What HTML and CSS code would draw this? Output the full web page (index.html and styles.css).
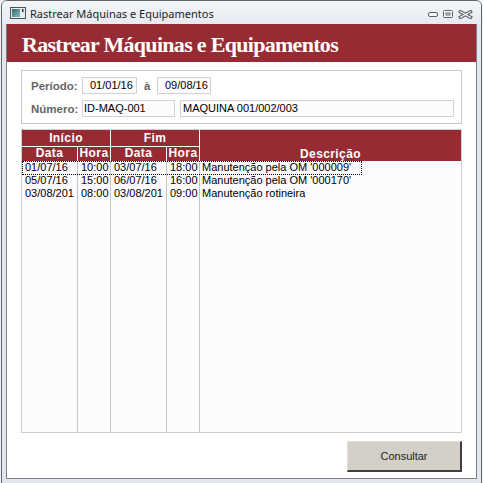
FILE: index.html
```html
<!DOCTYPE html>
<html lang="pt">
<head>
<meta charset="utf-8">
<title>Rastrear Máquinas e Equipamentos</title>
<link rel="stylesheet" href="styles.css">
</head>
<body>
<div class="window">
  <div class="titlebar">
    <svg class="appicon" width="16" height="12" viewBox="0 0 16 12">
      <defs>
        <linearGradient id="ig" x1="0" y1="0" x2="1" y2="1">
          <stop offset="0" stop-color="#2d6a63"/>
          <stop offset="1" stop-color="#8fb8c8"/>
        </linearGradient>
      </defs>
      <rect x="0.5" y="0.5" width="15" height="11" fill="#e8edf2" stroke="#4b545b"/>
      <rect x="2" y="2" width="8" height="8" fill="url(#ig)"/>
      <rect x="12" y="2" width="1.5" height="3" fill="#333"/>
    </svg>
    <span class="title">Rastrear Máquinas e Equipamentos</span>
    <div class="controls">
      <svg width="10" height="7" viewBox="0 0 10 7"><rect x="0.5" y="1.5" width="9" height="4" rx="1.5" fill="#fff" stroke="#5a5d62"/></svg>
      <svg width="10" height="8" viewBox="0 0 10 8"><rect x="0.5" y="0.5" width="9" height="7" rx="1" fill="#fff" stroke="#5a5d62"/><rect x="3" y="3" width="4" height="2" fill="none" stroke="#5a5d62"/></svg>
      <svg width="15" height="9" viewBox="0 0 15 9"><path d="M2.5 1.8 L12.5 7.2 M12.5 1.8 L2.5 7.2" stroke="#5a5d62" stroke-width="3.4" stroke-linecap="square" fill="none"/><path d="M2.5 1.8 L12.5 7.2 M12.5 1.8 L2.5 7.2" stroke="#fff" stroke-width="1.3" stroke-linecap="square" fill="none"/></svg>
    </div>
  </div>
  <div class="client">
    <div class="banner">Rastrear Máquinas e Equipamentos</div>
    <div class="content">
      <div class="criteria">
        <div class="row">
          <span class="label">Período:</span>
          <span class="input date">01/01/16</span>
          <span class="label sep">à</span>
          <span class="input date date2">09/08/16</span>
        </div>
        <div class="row">
          <span class="label">Número:</span>
          <span class="input id">ID-MAQ-001</span>
          <span class="input name">MAQUINA 001/002/003</span>
        </div>
      </div>
      <div class="grid">
        <div class="head">
          <div class="g1">Início</div>
          <div class="g2">Fim</div>
          <div class="desc">Descrição</div>
          <div class="sub">Data</div>
          <div class="sub">Hora</div>
          <div class="sub">Data</div>
          <div class="sub">Hora</div>
        </div>
        <div class="body">
          <div>01/07/16</div><div>10:00</div><div>03/07/16</div><div>18:00</div><div class="d">Manutenção pela OM '000009'</div>
          <div>05/07/16</div><div>15:00</div><div>06/07/16</div><div>16:00</div><div class="d">Manutenção pela OM '000170'</div>
          <div>03/08/201</div><div>08:00</div><div>03/08/201</div><div>09:00</div><div class="d">Manutenção rotineira</div>
          <div></div><div></div><div></div><div></div><div></div>
        </div>
        <div class="focus"></div>
      </div>
      <div class="actions">
        <button class="btn" type="button">Consultar</button>
      </div>
    </div>
  </div>
</div>
</body>
</html>
```
FILE: styles.css
```css
html, body {
  margin: 0;
  width: 483px;
  height: 483px;
  overflow: hidden;
}
body {
  background: #eef0f2;
  font-family: "Liberation Sans", Arial, sans-serif;
}
.window {
  box-sizing: border-box;
  width: 481px;
  height: 487px;
  margin-left: 1px;
  border: 1px solid #62676e;
  border-radius: 6px 6px 0 0;
  background: #e1e6ed;
  padding: 0 4px;
  display: flex;
  flex-direction: column;
}
.titlebar {
  height: 23px;
  margin: 0 -4px;
  padding: 0 8px;
  display: flex;
  align-items: center;
  background: linear-gradient(#f3f5f8, #e6eaf0);
  border-radius: 5px 5px 0 0;
}
.appicon {
  margin-top: 1px;
  margin-right: 4px;
}
.title {
  font-family: "Noto Sans", "Open Sans", sans-serif;
  font-size: 11px;
  color: #1e1e1e;
  padding-top: 1px;
}
.controls {
  margin-left: auto;
  display: flex;
  align-items: center;
  gap: 5px;
  margin-top: 3px;
}
.client {
  box-sizing: border-box;
  height: 455px;
  border: 1px solid #7b8089;
  border-top: none;
  background: #fff;
  display: flex;
  flex-direction: column;
}
.banner {
  height: 38px;
  background: #962b33;
  color: #fff;
  font-family: "Liberation Serif", "Times New Roman", serif;
  font-weight: bold;
  font-size: 22px;
  letter-spacing: -0.7px;
  line-height: 42px;
  padding-left: 15px;
  overflow: hidden;
  white-space: nowrap;
}
.content {
  flex: 1;
  padding: 8px 14px 0;
  display: flex;
  flex-direction: column;
}
.criteria {
  box-sizing: border-box;
  height: 54px;
  border: 1px solid #c9c9c9;
  padding: 6px 0 0 9px;
  display: flex;
  flex-direction: column;
  gap: 6px;
}
.row {
  display: flex;
  align-items: center;
  height: 17px;
}
.label {
  width: 51px;
  font-weight: bold;
  font-size: 11.5px;
  color: #666;
}
.sep {
  box-sizing: border-box;
  width: 20px;
  padding-left: 7px;
}
.input {
  box-sizing: border-box;
  height: 17px;
  border: 1px solid #d2d2d2;
  background: #fdfbfd;
  font-size: 11px;
  line-height: 14px;
  color: #000;
  white-space: nowrap;
  overflow: hidden;
}
.date {
  width: 55px;
  padding-left: 7px;
}
.date2 {
  width: 54px;
}
.id {
  width: 93px;
  padding-left: 1px;
  margin-right: 5px;
}
.name {
  width: 274px;
  padding-left: 2px;
}
.grid {
  position: relative;
  margin-top: 5px;
  box-sizing: border-box;
  height: 304px;
  border: 1px solid #cfcfcf;
  display: flex;
  flex-direction: column;
  background: #fdfbfd;
}
.head {
  display: grid;
  grid-template-columns: 55px 32px 55px 32px 261px;
  grid-template-rows: 16px 14px;
  gap: 1px;
  background: #fff;
}
.head > div {
  background: #962b33;
  color: #fff;
  font-weight: bold;
  font-size: 12px;
  letter-spacing: 0.4px;
  text-align: center;
  line-height: 16px;
}
.head .g1 {
  grid-column: 1 / 3;
  grid-row: 1;
}
.head .g2 {
  grid-column: 3 / 5;
  grid-row: 1;
}
.head .sub {
  grid-row: 2;
  line-height: 13px;
}
.head .desc {
  grid-column: 5;
  grid-row: 1 / 3;
  display: flex;
  align-items: flex-end;
  justify-content: center;
  line-height: 14px;
}
.body {
  flex: 1;
  display: grid;
  grid-template-columns: 55px 32px 55px 32px 261px;
  grid-template-rows: 13px 13px 13px 1fr;
  column-gap: 1px;
  background: #c4c4c4;
}
.body > div {
  background: #fdfbfd;
  font-size: 11px;
  line-height: 13px;
  color: #000;
  padding-left: 3px;
  white-space: nowrap;
  overflow: hidden;
}
.body > .d {
  padding-left: 2px;
}
.focus {
  position: absolute;
  left: 0;
  top: 31px;
  width: 340px;
  height: 14px;
  box-sizing: border-box;
  border: 1px dotted #000;
}
.actions {
  display: flex;
  justify-content: flex-end;
  margin-top: 8px;
}
.btn {
  box-sizing: border-box;
  width: 115px;
  height: 31px;
  padding: 0;
  background: #d4d0c8;
  border: 1px solid #e2dfd9;
  border-right: 2px solid #3f3f3f;
  border-bottom: 2px solid #3f3f3f;
  font-family: "Liberation Sans", Arial, sans-serif;
  font-size: 11px;
  color: #222;
}
```
